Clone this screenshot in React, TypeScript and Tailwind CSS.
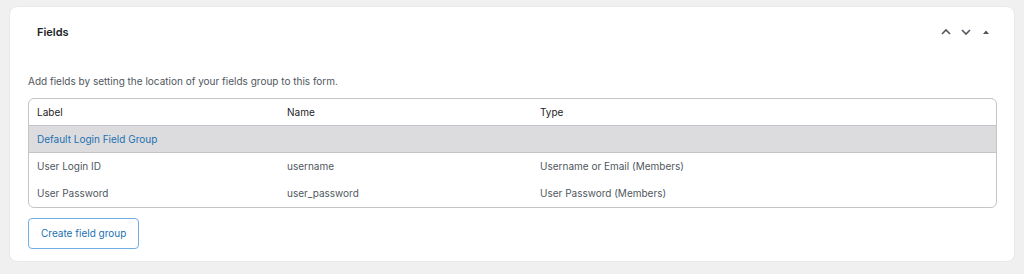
const rows = [
    { label: "User Login ID", name: "username", type: "Username or Email (Members)" },
    { label: "User Password", name: "user_password", type: "User Password (Members)" },
]

const font = { fontFamily: "Inter, 'Noto Sans', sans-serif" }

export default function App() {
    return (
        <div className="w-[1024px] h-[274px] bg-[#f0f0f1] pt-[6px] pl-[9px]" style={font}>
            <div className="w-[1006px] h-[256px] bg-white rounded-[8px] border border-[#e8e8e8]">
                <div className="flex items-center justify-between h-[50px] pl-[27px] pr-[22px]">
                    <h2 className="text-[11px] font-semibold text-[#1d2327]">Fields</h2>
                    <div className="flex items-center gap-[8px] text-[#50575e]">
                        <svg width="12" height="12" viewBox="0 0 12 12" fill="none" stroke="currentColor" strokeWidth="1.6">
                            <path d="M2 8 L6 4 L10 8" />
                        </svg>
                        <svg width="12" height="12" viewBox="0 0 12 12" fill="none" stroke="currentColor" strokeWidth="1.6">
                            <path d="M2 4 L6 8 L10 4" />
                        </svg>
                        <svg width="12" height="12" viewBox="0 0 12 12" fill="currentColor">
                            <path d="M3 8 L6 4.5 L9 8 Z" />
                        </svg>
                    </div>
                </div>
                <div className="pl-[18px] pr-[17px]">
                    <p className="text-[10px] text-[#50575e] mt-[17px] mb-[9px]">Add fields by setting the location of your fields group to this form.</p>
                    <div className="border border-[#c3c4c7] rounded-[6px] overflow-hidden text-[10px]">
                        <div className="grid grid-cols-[250px_253px_1fr] h-[27px] items-center px-[8px] text-[#1d2327] border-b border-[#c3c4c7]">
                            <span>Label</span>
                            <span>Name</span>
                            <span>Type</span>
                        </div>
                        <div className="h-[27px] bg-[#dcdcde] flex items-center px-[8px] border-b border-[#c3c4c7]">
                            <span className="text-[#2271b1]">Default Login Field Group</span>
                        </div>
                        {rows.map((row) => (
                            <div key={row.name} className="grid grid-cols-[250px_253px_1fr] h-[27px] items-center px-[8px] text-[#50575e]">
                                <span>{row.label}</span>
                                <span>{row.name}</span>
                                <span>{row.type}</span>
                            </div>
                        ))}
                    </div>
                    <button className="mt-[10px] h-[31px] px-[12px] border border-[#72aee6] rounded-[4px] text-[10px] text-[#2271b1] bg-white">
                        Create field group
                    </button>
                </div>
            </div>
        </div>
    )
}
